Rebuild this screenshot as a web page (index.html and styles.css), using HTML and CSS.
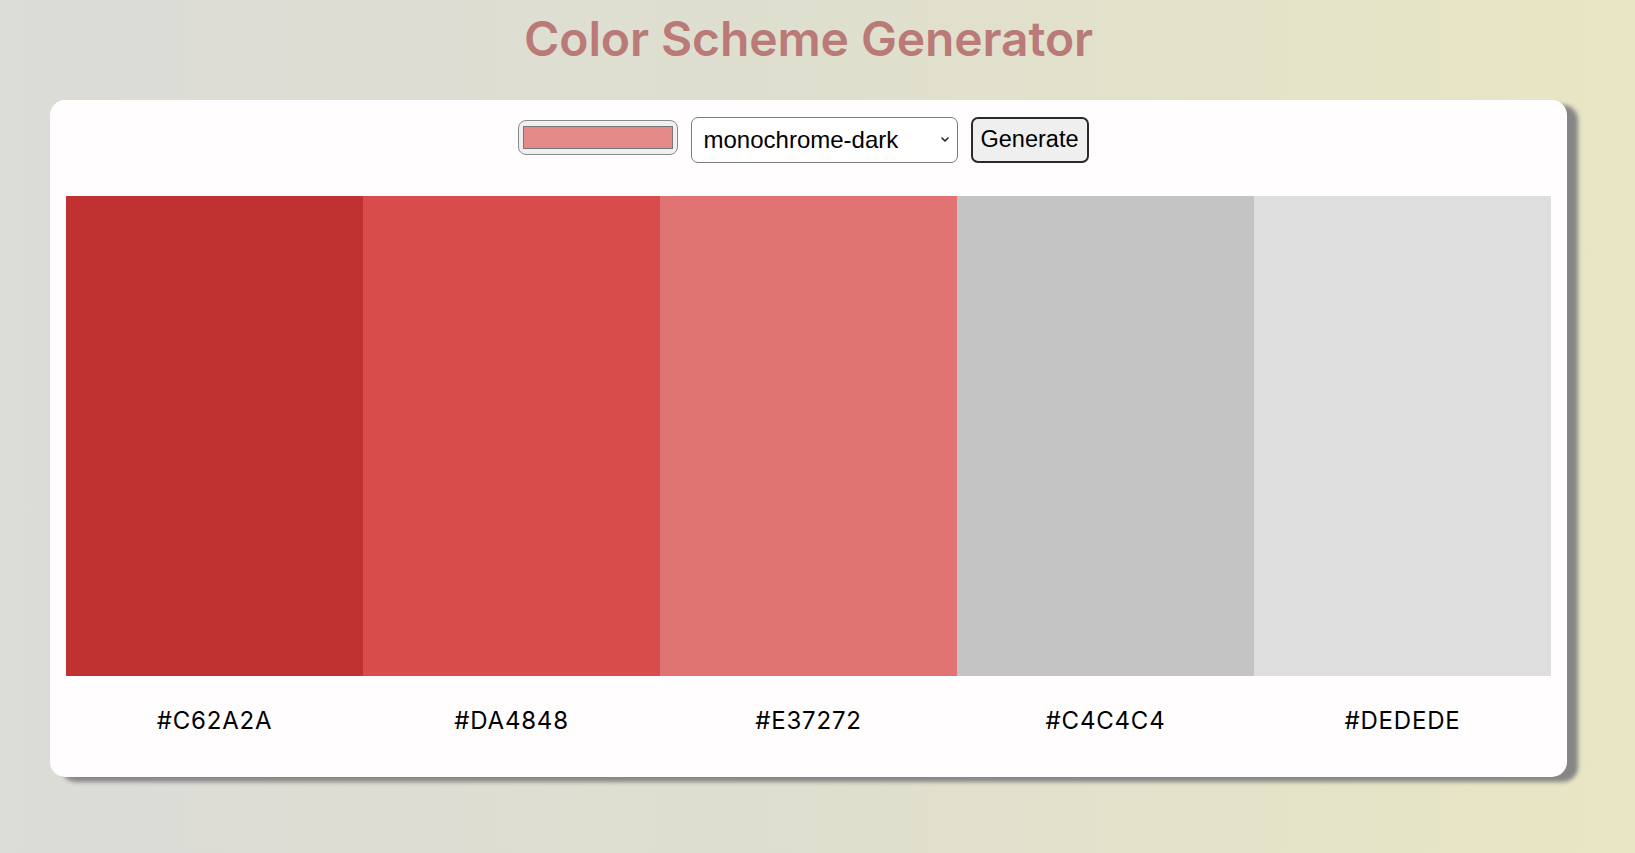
FILE: index.html
```html
<!DOCTYPE html>
<html>
<head>
<meta charset="utf-8">
<title>Color Scheme Generator</title>
<link rel="stylesheet" href="styles.css">
</head>
<body>
<div class="page">
  <h1 class="title">Color Scheme Generator</h1>
  <main class="card">
    <form class="controls">
      <span class="color-input"><span class="color-fill"></span></span>
      <span class="select">monochrome-dark
        <svg class="chev" width="10" height="7" viewBox="0 0 10 7"><path d="M2 2 L5 5 L8 2" fill="none" stroke="#222" stroke-width="1.6" stroke-linecap="round" stroke-linejoin="round"/></svg>
      </span>
      <button type="button" class="btn">Generate</button>
    </form>
    <div class="swatches">
      <div class="col"><div class="swatch c1"></div><p class="hex">#C62A2A</p></div>
      <div class="col"><div class="swatch c2"></div><p class="hex">#DA4848</p></div>
      <div class="col"><div class="swatch c3"></div><p class="hex">#E37272</p></div>
      <div class="col"><div class="swatch c4"></div><p class="hex">#C4C4C4</p></div>
      <div class="col"><div class="swatch c5"></div><p class="hex">#DEDEDE</p></div>
    </div>
  </main>
</div>
</body>
</html>
```
FILE: styles.css
```css
html, body {
  margin: 0;
  height: 100%;
}
body {
  background: linear-gradient(90deg, #dcdcd8 0%, #dfdfcf 50%, #e8e6c3 100%);
  font-family: Inter, "Liberation Sans", sans-serif;
  overflow: hidden;
}
.page {
  width: 1517px;
  margin-left: 50px;
}
.title {
  margin: 0;
  padding-top: 10px;
  height: 100px;
  box-sizing: border-box;
  text-align: center;
  font-size: 48px;
  line-height: 58px;
  font-weight: 600;
  letter-spacing: -0.1px;
  color: #b97a78;
}
.card {
  background: #fffdfd;
  border-radius: 15px;
  box-shadow: 11px 5px 4px #868686;
  padding: 16px 16px 41px;
}
.controls {
  display: flex;
  align-items: center;
  justify-content: center;
  gap: 13px;
  padding-right: 11px;
  height: 47px;
  margin: 0 0 33px;
  font-family: "Liberation Sans", Arial, sans-serif;
}
.color-input {
  box-sizing: border-box;
  width: 160px;
  height: 35px;
  margin-top: -4px;
  border: 1px solid #8a8a8a;
  border-radius: 8px;
  background: #efefef;
  padding: 5px 4px;
  display: flex;
}
.color-fill {
  flex: 1;
  background: #e48a89;
  border: 1px solid #777;
}
.select {
  box-sizing: border-box;
  width: 267px;
  height: 46px;
  border: 1px solid #7a7a7a;
  border-radius: 7px;
  background: #fff;
  display: flex;
  align-items: center;
  justify-content: space-between;
  padding: 0 7px 0 12px;
  font-size: 24px;
  color: #000;
}
.chev {
  display: block;
}
.btn {
  box-sizing: border-box;
  width: 118px;
  height: 46px;
  border: 2px solid #2a2a2a;
  border-radius: 7px;
  background: #efefef;
  font-family: "Liberation Sans", Arial, sans-serif;
  font-size: 23.5px;
  color: #000;
  padding: 0;
}
.swatches {
  display: grid;
  grid-template-columns: repeat(5, 1fr);
}
.swatch {
  height: 480px;
}
.c1 { background: #c03131; }
.c2 { background: #d84d4c; }
.c3 { background: #e07473; }
.c4 { background: #c4c4c4; }
.c5 { background: #dedede; }
.hex {
  margin: 30px 0 0;
  text-align: center;
  font-size: 24px;
  line-height: 30px;
  letter-spacing: 0.8px;
  color: #000;
}
```
